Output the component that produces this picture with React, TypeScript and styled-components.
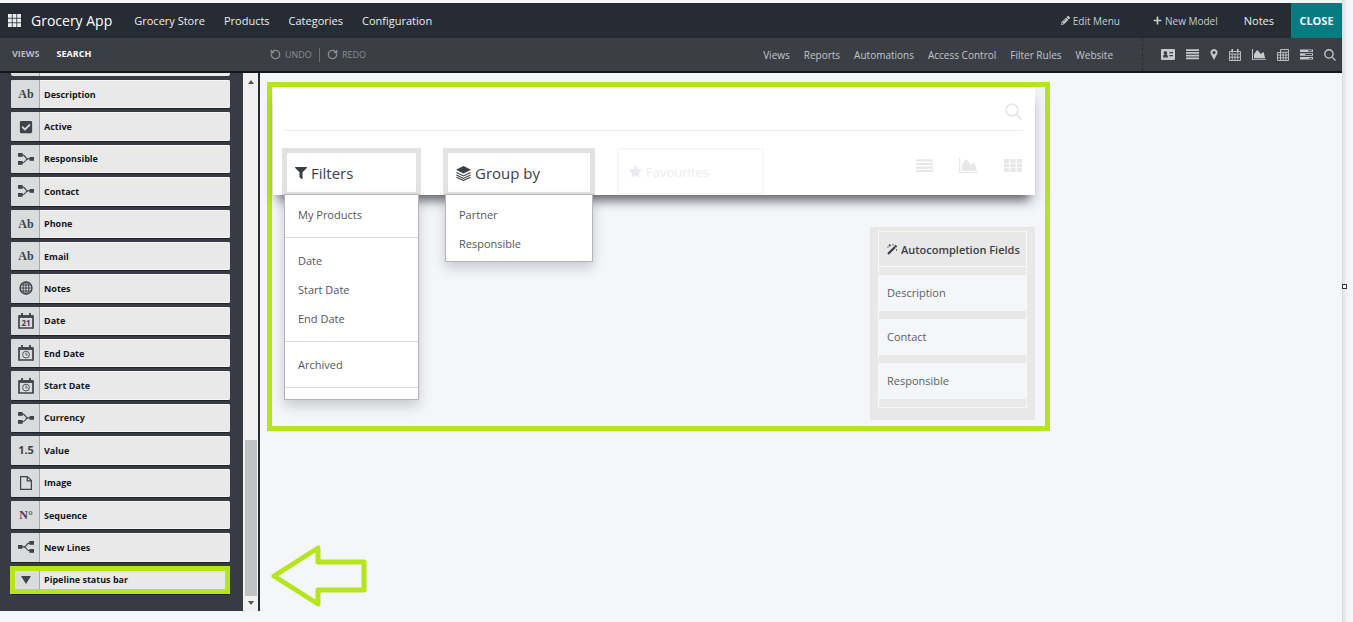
import React from 'react';
import styled, { createGlobalStyle, css } from 'styled-components';
import { FaCheckSquare, FaFilter, FaPencilAlt, FaPlus, FaStar } from 'react-icons/fa';
import { RotateCcw, RotateCw } from 'lucide-react';

const lime = '#b5e61d';
const dark = '#262c33';
const slate = '#3b3e45';
const canvas = '#f5f6fa';
const sans = '"Open Sans", "Noto Sans", sans-serif';
const serif = '"Liberation Serif", serif';

const Global = createGlobalStyle`
  *, *::before, *::after { box-sizing: border-box; }
  body { margin: 0; background: ${canvas}; font-family: ${sans}; font-size: 11px; color: ${slate}; }
  button, input { font: inherit; color: inherit; background: none; border: 0; padding: 0; margin: 0; }
  button { cursor: pointer; }
  a { color: inherit; text-decoration: none; }
  ul { list-style: none; margin: 0; padding: 0; }
  svg { display: block; flex: none; }
`;

const Page = styled.div`
  min-height: 100vh;
  display: flex;
  padding-top: 3px;
`;
const Studio = styled.div`
  flex: 1;
  min-width: 0;
  display: flex;
  flex-direction: column;
`;
const Gutter = styled.div`
  width: 11px;
  display: flex;
  align-items: center;
  margin-top: -3px;
  background: linear-gradient(to right, #dcdddf 0 1px, #e6e7e8 1px 3px, #efefef 3px 5px, ${canvas} 5px);
`;
const Handle = styled.span`
  width: 5px;
  height: 5px;
  margin-top: -49px;
  border: 1px solid #333;
  background: #fff;
`;

const TopBar = styled.header`
  height: 35px;
  display: flex;
  align-items: center;
  justify-content: space-between;
  padding-left: 8px;
  background: ${dark};
  color: #eceded;
`;
const Group = styled.div<{ $gap: number }>`
  display: flex;
  align-items: center;
  gap: ${p => p.$gap}px;
  height: 100%;
`;
const Brand = styled.div`
  display: flex;
  align-items: center;
  gap: 10px;
  margin-right: 3px;
`;
const AppTitle = styled.h1`
  margin: 0;
  font-size: 14px;
  font-weight: 400;
  line-height: 20px;
  color: #fff;
`;
const NavLink = styled.a`
  line-height: 16px;
  white-space: nowrap;
`;
const ToolButton = styled.button`
  display: flex;
  align-items: center;
  gap: 3px;
  color: #c9cbcd;
  font-size: 10px;
  line-height: 16px;
  white-space: nowrap;
`;
const CloseButton = styled.button`
  align-self: stretch;
  width: 51px;
  background: #077b81;
  color: #f3f8f8;
  font-weight: 700;
  font-size: 11px;
`;

const SubBar = styled.div`
  height: 35px;
  display: flex;
  align-items: center;
  background: ${slate};
  border-bottom: 2px solid #14171b;
`;
const Tabs = styled.div`
  width: 270px;
  padding: 0 0 2px 12px;
  display: flex;
  gap: 17px;
`;
const Tab = styled.button<{ $active?: boolean }>`
  font-size: 9px;
  font-weight: 700;
  line-height: 14px;
  color: ${p => (p.$active ? '#fff' : '#b9babd')};
`;
const History = styled.div`
  flex: 1;
  display: flex;
  gap: 7px;
`;
const HistoryButton = styled.button`
  display: flex;
  align-items: center;
  gap: 4px;
  font-size: 9px;
  line-height: 14px;
  color: #8c8e93;
  & + & { border-left: 1px solid #6b6e74; padding-left: 7px; }
`;
const SubNav = styled.nav`
  display: flex;
  gap: 14px;
  font-size: 10px;
  color: #c4c5c8;
  padding-right: 29px;
`;
const ViewIcons = styled.div`
  align-self: stretch;
  display: flex;
  align-items: center;
  gap: 11px;
  padding: 0 6px 0 18px;
  border-left: 1px dashed #2a2d34;
  color: #c8c9cb;
`;
const IconButton = styled.button`
  height: 24px;
  display: flex;
  align-items: center;
  justify-content: center;
`;

const Body = styled.div`
  flex: 1;
  display: flex;
`;
const Side = styled.aside`
  position: relative;
  display: flex;
  width: 260px;
  margin-bottom: 11px;
  border-right: 2px solid ${dark};
`;
const FieldPane = styled.div`
  flex: 1;
  display: flex;
  flex-direction: column;
  padding: 0 13px 17px 11px;
  background: #383b43;
`;
const ClippedField = styled.div`
  height: 3px;
  margin-bottom: 4px;
  background: linear-gradient(to right, #dadbdd 0 28px, #a4a6aa 28px 29px, #ebebeb 29px);
  border-radius: 0 0 2px 2px;
`;
const FieldList = styled.ul`
  flex: 1;
  display: grid;
  grid-auto-rows: 1fr;
  gap: 4px;
`;
const Field = styled.li<{ $marked?: boolean }>`
  position: relative;
  display: flex;
  background: #e9e9e9;
  border-radius: 2px;
  box-shadow: inset 0 1px #f6f6f6, inset 0 -1px #f6f6f6, 0 1px 0 #1f2329;
  ${p => p.$marked && css`
    &::after {
      content: '';
      position: absolute;
      inset: 0 0 0 -1px;
      border: 5px solid ${lime};
    }
  `}
`;
const FieldIcon = styled.span`
  width: 29px;
  display: flex;
  align-items: center;
  justify-content: center;
  padding-left: 2px;
  border-right: 1px solid #a4a6aa;
  border-radius: 2px 0 0 2px;
  background: #dadbdd;
  color: #3f434a;
`;
const Glyph = styled.b<{ $sans?: boolean }>`
  font-family: ${p => (p.$sans ? sans : serif)};
  font-size: ${p => (p.$sans ? 11 : 12)}px;
  line-height: 16px;
`;
const FieldName = styled.span`
  align-self: center;
  padding: 1px 0 0 4px;
  font-size: 9px;
  font-weight: 700;
  line-height: 14px;
  color: #14171d;
`;
const Scroll = styled.div`
  width: 15px;
  display: flex;
  flex-direction: column;
  align-items: center;
  padding: 7px 0 6px;
  background: #f1f1f2;
  color: #50535a;
`;
const Thumb = styled.div`
  width: 12px;
  height: 156px;
  margin: auto 0 5px;
  background: #c1c2c4;
`;
const Pointer = styled.svg`
  position: absolute;
  left: 270px;
  bottom: 4px;
`;

const Main = styled.main`
  flex: 1;
  min-width: 0;
  padding: 9px 7px;
`;
const Frame = styled.section`
  max-width: 783px;
  display: flex;
  flex-direction: column;
  border: 5px solid ${lime};
`;
const SearchPanel = styled.div`
  position: relative;
  height: 108px;
  margin: 0 10px 0 1px;
  padding: 0 12px 0 9px;
  background: #fff;
  box-shadow: 0 11px 10px -6px rgba(40, 42, 52, 0.7), 2px 6px 14px rgba(60, 60, 70, 0.12);
`;
const SearchRow = styled.div`
  display: flex;
  align-items: center;
  height: 44px;
  margin-left: 3px;
  padding: 6px 1px 0 0;
  border-bottom: 1px solid #ececee;
  color: #e7e7ea;
`;
const SearchInput = styled.input`
  flex: 1;
  height: 28px;
  outline: 0;
`;
const FilterRow = styled.div`
  display: flex;
  align-items: flex-start;
  gap: 22px;
  padding-top: 17px;
`;
const Drop = styled.div<{ $width: number }>`
  position: relative;
  width: ${p => p.$width}px;
`;
const DropButton = styled.button<{ $faint?: boolean }>`
  width: 100%;
  height: 47px;
  display: flex;
  align-items: center;
  gap: 4px;
  padding: 1px 8px 0;
  border: 5px solid #e1e2e4;
  border-bottom-width: 3px;
  font-size: 15px;
  ${p => p.$faint && css`
    border: 2px solid #f8f8fa;
    padding: 0 10px;
    color: #ececef;
    font-size: 13px;
  `}
`;
const Menu = styled.ul`
  position: absolute;
  z-index: 1;
  top: 46px;
  left: 2px;
  right: 2px;
  padding: 5px 0 3px;
  background: #fff;
  border: 1px solid #b3b5b9;
  box-shadow: 0 6px 12px rgba(0, 0, 0, 0.18);
`;
const MenuItem = styled.li<{ $ruled?: boolean }>`
  padding: 0 13px;
  line-height: 29px;
  font-size: 11px;
  color: #53565d;
  ${p => p.$ruled && css`
    border-bottom: 1px solid #d8d9dc;
    padding-bottom: 8px;
    margin-bottom: 8px;
  `}
`;
const Modes = styled.div`
  flex: 1;
  display: flex;
  align-items: center;
  justify-content: flex-end;
  gap: 26px;
  padding: 10px 1px 0 0;
  color: #e7e7ea;
`;
const AutoPanel = styled.section`
  align-self: flex-end;
  width: 165px;
  margin: 32px 10px 6px 0;
  padding: 4px 8px 12px;
  background: #e8e8e8;
`;
const AutoBox = styled.div`
  border: 1px solid #f7f7f8;
`;
const AutoTitle = styled.h2`
  display: flex;
  align-items: center;
  gap: 3px;
  height: 35px;
  margin: 0;
  padding-left: 8px;
  border-bottom: 1px solid #f7f7f8;
  font-size: 11px;
  font-weight: 600;
  white-space: nowrap;
`;
const AutoItem = styled.li`
  height: 36px;
  margin: 8px 0;
  padding-left: 8px;
  line-height: 36px;
  background: ${canvas};
  font-size: 11px;
  color: #5c5f66;
`;

const SearchIcon = ({ size }: { size: number }) => (
  <svg width={size} height={size} viewBox="0 0 16 16" fill="none" stroke="currentColor" strokeWidth="1.7">
    <circle cx="6.6" cy="6.6" r="5.6" /><path d="M10.8 10.8 15.3 15.3" />
  </svg>
);
const AreaIcon = ({ width }: { width: number }) => (
  <svg width={width} height={width * 0.8} viewBox="0 0 20 16" fill="currentColor">
    <path d="M0 0h1.4v14.6H20V16H0z" />
    <path d="M2.8 13.4V7.5L6.6 2.2H8.6L12.4 7 16.6 4.4 18.8 13.4z" />
  </svg>
);
const ListIcon = ({ width }: { width: number }) => (
  <svg width={width} height={width * 0.8} viewBox="0 0 20 16" fill="currentColor">
    <path d="M0 .4h20v2.6H0zM0 4.6h20v2.6H0zM0 8.8h20v2.6H0zM0 13h20v2.6H0z" />
  </svg>
);
const GridIcon = ({ width }: { width: number }) => (
  <svg width={width} height={13} viewBox="0 0 13 13" preserveAspectRatio="none" fill="currentColor">
    {[0, 4.6, 9.2].map(y => [0, 4.6, 9.2].map(x => <rect key={`${x}-${y}`} x={x} y={y} width="3.8" height="3.8" />))}
  </svg>
);
const CardIcon = () => (
  <svg width="14" height="11" viewBox="0 0 14 11" fill="currentColor" fillRule="evenodd">
    <path d="M1 0h12q1 0 1 1v9q0 1-1 1H1q-1 0-1-1V1q0-1 1-1zM4.3 2.3a1.6 1.6 0 0 0-.8 3Q2 5.7 2 8.5h5q0-2.8-1.7-3.2a1.6 1.6 0 0 0-1-3zM8.5 3v1.2H12V3zM8.5 6v1.2H12V6z" />
  </svg>
);
const PinIcon = () => (
  <svg width="8" height="11" viewBox="0 0 8 11" fill="currentColor" fillRule="evenodd">
    <path d="M4 0a3.5 3.5 0 0 1 3.3 4.8L4 11 .7 4.8A3.5 3.5 0 0 1 4 0zM4 2a1.6 1.6 0 1 0 0 3.2A1.6 1.6 0 0 0 4 2z" />
  </svg>
);
const CalendarIcon = () => (
  <svg width="12" height="12" viewBox="0 0 12 12" fill="none" stroke="currentColor">
    <path d="M.5 2.5h11v9H.5zM.5 5h11M.5 8.2h11M3.2 5v6.5M6 5v6.5M8.8 5v6.5" strokeWidth=".9" />
    <path d="M3.2 0v3.4M8.8 0v3.4" strokeWidth="1.6" />
  </svg>
);
const PivotIcon = () => (
  <svg width="12" height="12" viewBox="0 0 12 12" fill="none" stroke="currentColor" strokeWidth=".9">
    <path d="M3.5.5h8v11h-8zM3.5 3.2h8M3.5 3.5h-3v8h3M.5 6h11M.5 8.8h11M6.2 3v8.5M8.9 3v8.5" />
  </svg>
);
const TasksIcon = () => (
  <svg width="13" height="11" viewBox="0 0 13 11" fill="currentColor" fillRule="evenodd">
    <path d="M0 .5h13V3H0zM8 1.3v.9h4v-.9zM0 4.3h13v2.5H0zM5 5.1V6h7v-.9zM0 8.1h13v2.5H0zM9 8.9v.9h3v-.9z" />
  </svg>
);
const WandIcon = () => (
  <svg width="11" height="11" viewBox="0 0 11 11" fill="none" stroke="currentColor">
    <path d="M1 10 9.4 1.6" strokeWidth="2.2" /><path d="M7.4 2.6 8.6 3.8" stroke="#e8e8e8" strokeWidth=".6" />
    <path d="M2.8.2v2.4M1.6 1.4H4M.2 3h1.6M5.2.8h1.6M9.6 5v1.8" strokeWidth=".8" />
  </svg>
);
const LayersIcon = () => (
  <svg width="15" height="15" viewBox="0 0 15 15" fill="currentColor">
    <path d="M7.5 0 15 3.8 7.5 7.6 0 3.8z" />
    <path d="M.4 6.4 7.5 10l7.1-3.6M.4 8.9l7.1 3.6 7.1-3.6M.4 11.2l7.1 3.3 7.1-3.3" fill="none" stroke="currentColor" strokeWidth="1.1" />
  </svg>
);
const GlobeIcon = () => (
  <svg width="14" height="14" viewBox="0 0 14 14" fill="none" stroke="currentColor">
    <circle cx="7" cy="7" r="6" strokeWidth="1.4" /><ellipse cx="7" cy="7" rx="3" ry="6" />
    <path d="M7 1v12M1 7h12M1.8 4h10.4M1.8 10h10.4" />
  </svg>
);
const RelationIcon = ({ flip }: { flip?: boolean }) => (
  <svg width="16" height="12" viewBox="0 0 16 12" fill="currentColor">
    <g transform={flip ? 'matrix(-1 0 0 1 16 0)' : undefined}>
      <rect x="0" y="0" width="4.6" height="3.8" /><rect x="0" y="8" width="4.6" height="3.8" />
      <rect x="11.6" y="4" width="4.4" height="3.8" />
      <path d="M4 1.9c4 0 3 4 6 4h2M4 9.9c4 0 3-4 6-4" fill="none" stroke="currentColor" strokeWidth="1.1" />
    </g>
  </svg>
);
const DateIcon = ({ clock }: { clock?: boolean }) => (
  <svg width="16" height="16" viewBox="0 0 16 16" fill="none" stroke="currentColor">
    <path d="M1 3h14v12H1z" strokeWidth="1.7" /><path d="M1 3.6h14" strokeWidth="2.6" />
    <path d="M4 0v3M12 0v3" strokeWidth="1.8" />
    {clock
      ? <><circle cx="8" cy="9.6" r="3.4" strokeWidth=".9" /><path d="M8 7.6v2.3h1.8" strokeWidth=".8" /></>
      : <text x="8" y="12.6" textAnchor="middle" fontSize="8" fontWeight="700" fill="currentColor" stroke="none">21</text>}
  </svg>
);
const PageIcon = () => (
  <svg width="12" height="14" viewBox="0 0 12 14" fill="none" stroke="currentColor" strokeWidth="1.2">
    <path d="M.6.6h6.8l4 4v8.8H.6zM7.2.6v4.2h4.2" />
  </svg>
);
const Triangle = ({ width, height, up }: { width: number; height: number; up?: boolean }) => (
  <svg width={width} height={height} viewBox="0 0 10 7" preserveAspectRatio="none" fill="currentColor">
    <path d={up ? 'M0 7h10L5 0z' : 'M0 0h10L5 7z'} />
  </svg>
);

const ab = <Glyph>Ab</Glyph>;
const fields: [string, React.ReactNode][] = [
  ['Description', ab],
  ['Active', <FaCheckSquare size={14} />],
  ['Responsible', <RelationIcon />],
  ['Contact', <RelationIcon />],
  ['Phone', ab],
  ['Email', ab],
  ['Notes', <GlobeIcon />],
  ['Date', <DateIcon />],
  ['End Date', <DateIcon clock />],
  ['Start Date', <DateIcon clock />],
  ['Currency', <RelationIcon />],
  ['Value', <Glyph $sans>1.5</Glyph>],
  ['Image', <PageIcon />],
  ['Sequence', <Glyph>N°</Glyph>],
  ['New Lines', <RelationIcon flip />],
  ['Pipeline status bar', <Triangle width={10} height={8} />],
];
const views: [string, React.ReactNode][] = [
  ['Form', <CardIcon />],
  ['List', <ListIcon width={13} />],
  ['Map', <PinIcon />],
  ['Calendar', <CalendarIcon />],
  ['Graph', <AreaIcon width={14} />],
  ['Pivot', <PivotIcon />],
  ['Gantt', <TasksIcon />],
  ['Search', <SearchIcon size={12} />],
];

export default function App() {
  return (
    <Page>
      <Global />
      <Studio>
        <TopBar>
          <Group $gap={19} as="nav">
            <Brand><GridIcon width={13} /><AppTitle>Grocery App</AppTitle></Brand>
            {['Grocery Store', 'Products', 'Categories', 'Configuration'].map(t => <NavLink href="#" key={t}>{t}</NavLink>)}
          </Group>
          <Group $gap={17}>
            <Group $gap={26}>
              <Group $gap={33}>
                <ToolButton><FaPencilAlt size={9} />Edit Menu</ToolButton>
                <ToolButton><FaPlus size={9} />New Model</ToolButton>
              </Group>
              <NavLink href="#">Notes</NavLink>
            </Group>
            <CloseButton>CLOSE</CloseButton>
          </Group>
        </TopBar>
        <SubBar>
          <Tabs><Tab>VIEWS</Tab><Tab $active>SEARCH</Tab></Tabs>
          <History>
            <HistoryButton><RotateCcw size={11} strokeWidth={3} />UNDO</HistoryButton>
            <HistoryButton><RotateCw size={11} strokeWidth={3} />REDO</HistoryButton>
          </History>
          <SubNav>
            {['Views', 'Reports', 'Automations', 'Access Control', 'Filter Rules', 'Website'].map(t => <NavLink href="#" key={t}>{t}</NavLink>)}
          </SubNav>
          <ViewIcons>
            {views.map(([name, icon]) => <IconButton key={name} aria-label={name}>{icon}</IconButton>)}
          </ViewIcons>
        </SubBar>
        <Body>
          <Side>
            <FieldPane>
              <ClippedField />
              <FieldList>
                {fields.map(([name, icon], i) => (
                  <Field key={name} $marked={i === fields.length - 1}>
                    <FieldIcon>{icon}</FieldIcon><FieldName>{name}</FieldName>
                  </Field>
                ))}
              </FieldList>
            </FieldPane>
            <Scroll aria-hidden="true">
              <Triangle width={6} height={4} up /><Thumb /><Triangle width={6} height={4} />
            </Scroll>
            <Pointer width="100" height="64" viewBox="0 0 100 64" fill="none" stroke={lime} strokeWidth="5" strokeLinejoin="round" aria-hidden="true">
              <path d="M4 33 48 5V19H94V47H48V61z" />
            </Pointer>
          </Side>
          <Main>
            <Frame>
              <SearchPanel>
                <SearchRow>
                  <SearchInput aria-label="Search" />
                  <IconButton aria-label="Run search"><SearchIcon size={17} /></IconButton>
                </SearchRow>
                <FilterRow>
                  <Drop $width={139}>
                    <DropButton><FaFilter size={12} />Filters</DropButton>
                    <Menu>
                      <MenuItem $ruled>My Products</MenuItem>
                      <MenuItem>Date</MenuItem>
                      <MenuItem>Start Date</MenuItem>
                      <MenuItem $ruled>End Date</MenuItem>
                      <MenuItem $ruled>Archived</MenuItem>
                    </Menu>
                  </Drop>
                  <Drop $width={152}>
                    <DropButton><LayersIcon />Group by</DropButton>
                    <Menu>
                      <MenuItem>Partner</MenuItem>
                      <MenuItem>Responsible</MenuItem>
                    </Menu>
                  </Drop>
                  <Drop $width={147}>
                    <DropButton $faint><FaStar size={13} />Favourites</DropButton>
                  </Drop>
                  <Modes>
                    <ListIcon width={17} /><AreaIcon width={19} /><GridIcon width={18} />
                  </Modes>
                </FilterRow>
              </SearchPanel>
              <AutoPanel>
                <AutoBox>
                  <AutoTitle><WandIcon />Autocompletion Fields</AutoTitle>
                  <ul>
                    <AutoItem>Description</AutoItem>
                    <AutoItem>Contact</AutoItem>
                    <AutoItem>Responsible</AutoItem>
                  </ul>
                </AutoBox>
              </AutoPanel>
            </Frame>
          </Main>
        </Body>
      </Studio>
      <Gutter><Handle /></Gutter>
    </Page>
  );
}
